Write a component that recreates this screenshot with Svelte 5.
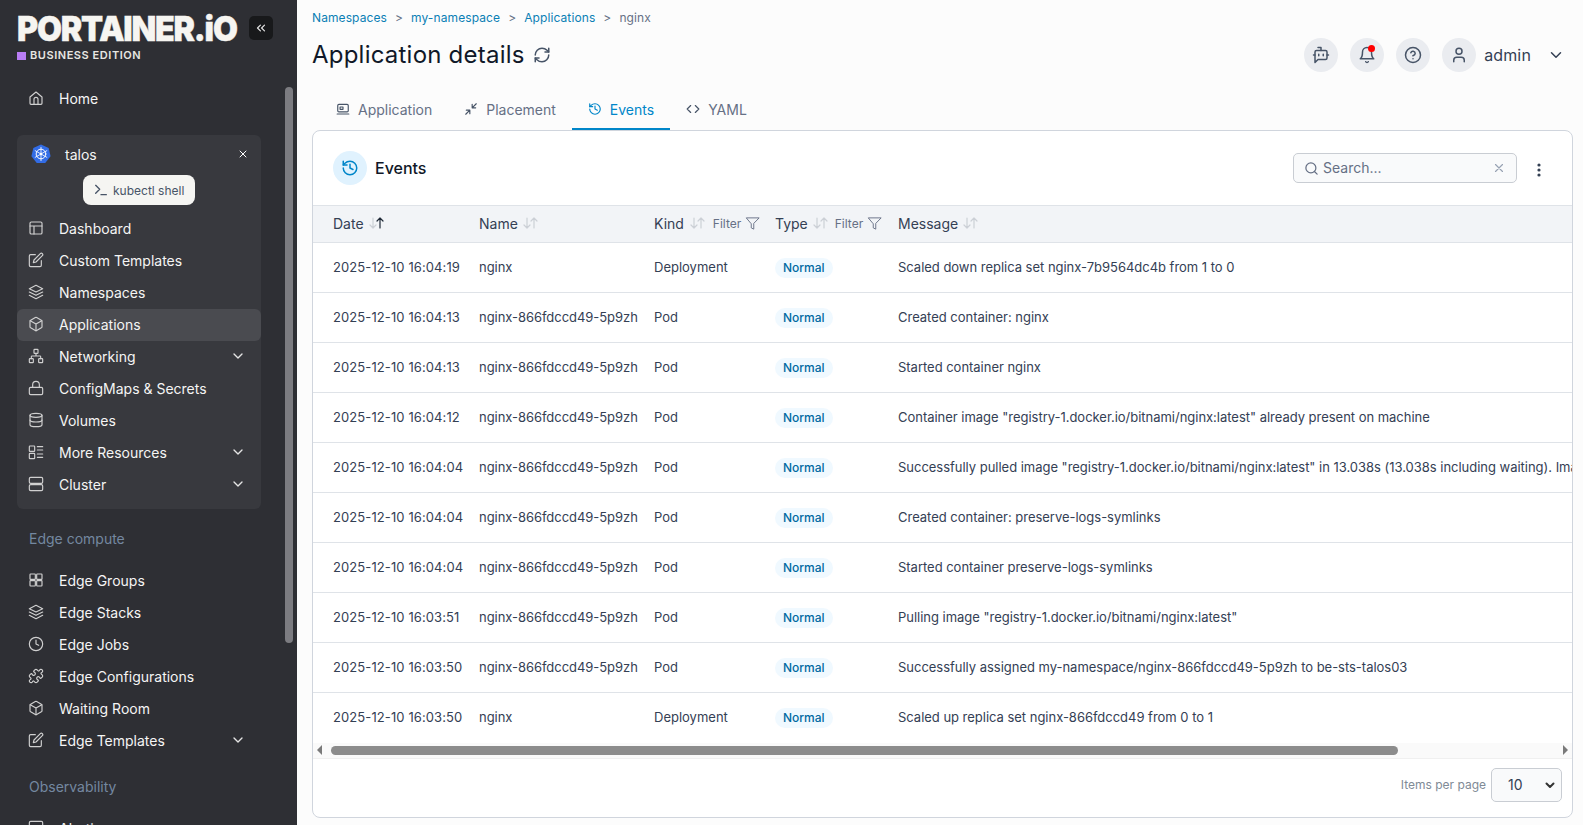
<script>
  const I = {
    home: '<path d="M3 10.500 12 3l9 7.500V20a1.500 1.500 0 0 1-1.500 1.500h-15A1.500 1.500 0 0 1 3 20z"/><path d="M9 21.500V14a3 3 0 0 1 6 0v7.500"/>',
    layout: '<rect x="3" y="3" width="18" height="18" rx="2"/><path d="M3 9h18M9 21V9"/>',
    edit: '<path d="M11 4H4a2 2 0 0 0-2 2v14a2 2 0 0 0 2 2h14a2 2 0 0 0 2-2v-7"/><path d="M18.500 2.500a2.121 2.121 0 0 1 3 3L12 15l-4 1 1-4z"/>',
    layers: '<path d="M12 2 2 7l10 5 10-5z"/><path d="m2 17 10 5 10-5"/><path d="m2 12 10 5 10-5"/>',
    box: '<path d="M21 16V8a2 2 0 0 0-1-1.730l-7-4a2 2 0 0 0-2 0l-7 4A2 2 0 0 0 3 8v8a2 2 0 0 0 1 1.730l7 4a2 2 0 0 0 2 0l7-4A2 2 0 0 0 21 16z"/><path d="M3.270 6.960 12 12.010l8.730-5.050M12 22.080V12"/>',
    network: '<rect x="16" y="16" width="6" height="6" rx="1"/><rect x="2" y="16" width="6" height="6" rx="1"/><rect x="9" y="2" width="6" height="6" rx="1"/><path d="M5 16v-3a1 1 0 0 1 1-1h12a1 1 0 0 1 1 1v3M12 12V8"/>',
    lock: '<rect x="2" y="11" width="20" height="11" rx="2"/><path d="M7 11V7a5 5 0 0 1 10 0v4"/>',
    db: '<ellipse cx="12" cy="5" rx="9" ry="3"/><path d="M21 12c0 1.660-4 3-9 3s-9-1.340-9-3"/><path d="M3 5v14c0 1.660 4 3 9 3s9-1.340 9-3V5"/>',
    list: '<rect x="2" y="3" width="8" height="8" rx="1"/><rect x="2" y="14" width="8" height="8" rx="1"/><path d="M14 4h8M14 9h8M14 15h8M14 20h8"/>',
    server: '<rect x="2" y="2" width="20" height="9" rx="2"/><rect x="2" y="13" width="20" height="9" rx="2"/>',
    grid: '<rect x="3" y="3" width="8" height="8" rx="1"/><rect x="13" y="3" width="8" height="8" rx="1"/><rect x="13" y="13" width="8" height="8" rx="1"/><rect x="3" y="13" width="8" height="8" rx="1"/>',
    clock: '<circle cx="12" cy="12" r="10"/><path d="M12 6v6l4 2"/>',
    puzzle: '<path d="M19.439 7.850c-.049.322.059.648.289.878l1.568 1.568c.47.47.706 1.087.706 1.704s-.235 1.233-.706 1.704l-1.611 1.611a.98.98 0 0 1-.837.276c-.47-.07-.802-.48-.968-.925a2.501 2.501 0 1 0-3.214 3.214c.446.166.855.497.925.968a.979.979 0 0 1-.276.837l-1.61 1.610a2.404 2.404 0 0 1-1.705.707 2.402 2.402 0 0 1-1.704-.706l-1.568-1.568a1.026 1.026 0 0 0-.877-.29c-.493.074-.84.504-1.020.968a2.500 2.500 0 1 1-3.237-3.237c.464-.18.894-.527.967-1.020a1.026 1.026 0 0 0-.289-.877l-1.568-1.568A2.402 2.402 0 0 1 1.998 12c0-.617.236-1.234.706-1.704L4.230 8.770c.24-.24.581-.353.917-.303.515.077.877.528 1.073 1.010a2.500 2.500 0 1 0 3.259-3.259c-.482-.196-.933-.558-1.010-1.073-.05-.336.062-.676.303-.917l1.525-1.525A2.402 2.402 0 0 1 12 1.998c.617 0 1.234.236 1.704.706l1.568 1.568c.23.23.556.338.877.29.493-.074.84-.504 1.020-.968a2.500 2.500 0 1 1 3.237 3.237c-.464.18-.894.527-.967 1.020Z"/>',
    chev: '<path d="m6 9 6 6 6-6"/>',
    x: '<path d="M18 6 6 18M6 6l12 12"/>',
    dbl: '<path d="m11 17-5-5 5-5M18 17l-5-5 5-5"/>',
    term: '<path d="m4 17 6-6-6-6M12 19h8"/>',
    refresh: '<path d="M3 12a9 9 0 0 1 9-9 9.750 9.750 0 0 1 6.740 2.740L21 8"/><path d="M21 3v5h-5"/><path d="M21 12a9 9 0 0 1-9 9 9.750 9.750 0 0 1-6.740-2.740L3 16"/><path d="M8 16H3v5"/>',
    history: '<path d="M3 12a9 9 0 1 0 9-9 9.750 9.750 0 0 0-6.740 2.740L3 8"/><path d="M3 3v5h5"/><path d="M12 7v5l4 2"/>',
    app: '<rect x="3" y="4" width="18" height="13" rx="2"/><path d="M2 20.500h20M7 8.500h5v4H7z"/>',
    shrink: '<path d="M4 14h6v6M20 10h-6V4M14 10l7-7M3 21l7-7"/>',
    code: '<path d="m16 18 6-6-6-6M8 6l-6 6 6 6"/>',
    bot: '<path d="M12 6V2H8"/><path d="m8 18-4 4V8a2 2 0 0 1 2-2h12a2 2 0 0 1 2 2v8a2 2 0 0 1-2 2Z"/><path d="M2 12h2M9 11v2M15 11v2M20 12h2"/>',
    bell: '<path d="M6 8a6 6 0 0 1 12 0c0 7 3 9 3 9H3s3-2 3-9"/><path d="M10.300 21a1.940 1.940 0 0 0 3.400 0"/>',
    help: '<circle cx="12" cy="12" r="10"/><path d="M9.090 9a3 3 0 0 1 5.830 1c0 2-3 3-3 3M12 17h.01"/>',
    user: '<path d="M19 21v-2a4 4 0 0 0-4-4H9a4 4 0 0 0-4 4v2"/><circle cx="12" cy="7" r="4"/>',
    search: '<circle cx="11" cy="11" r="8"/><path d="m21 21-4.300-4.300"/>',
    filter: '<path d="M22 3H2l8 9.460V19l4 2v-8.540z"/>'
  };

  const cluster = [
    ['layout', 'Dashboard'], ['edit', 'Custom Templates'], ['layers', 'Namespaces'],
    ['box', 'Applications', false, true], ['network', 'Networking', true],
    ['lock', 'ConfigMaps & Secrets'], ['db', 'Volumes'],
    ['list', 'More Resources', true], ['server', 'Cluster', true]
  ];
  const edge = [
    ['grid', 'Edge Groups'], ['layers', 'Edge Stacks'], ['clock', 'Edge Jobs'],
    ['puzzle', 'Edge Configurations'], ['box', 'Waiting Room'], ['edit', 'Edge Templates', true]
  ];
  const tabs = [['app', 'Application'], ['shrink', 'Placement'], ['history', 'Events', true], ['code', 'YAML']];
  const pod = 'nginx-866fdccd49-5p9zh';
  const rows = [
    ['2025-12-10 16:04:19', 'nginx', 'Deployment', 'Scaled down replica set nginx-7b9564dc4b from 1 to 0'],
    ['2025-12-10 16:04:13', pod, 'Pod', 'Created container: nginx'],
    ['2025-12-10 16:04:13', pod, 'Pod', 'Started container nginx'],
    ['2025-12-10 16:04:12', pod, 'Pod', 'Container image "registry-1.docker.io/bitnami/nginx:latest" already present on machine'],
    ['2025-12-10 16:04:04', pod, 'Pod', 'Successfully pulled image "registry-1.docker.io/bitnami/nginx:latest" in 13.038s (13.038s including waiting). Image size: 68.2 MB'],
    ['2025-12-10 16:04:04', pod, 'Pod', 'Created container: preserve-logs-symlinks'],
    ['2025-12-10 16:04:04', pod, 'Pod', 'Started container preserve-logs-symlinks'],
    ['2025-12-10 16:03:51', pod, 'Pod', 'Pulling image "registry-1.docker.io/bitnami/nginx:latest"'],
    ['2025-12-10 16:03:50', pod, 'Pod', 'Successfully assigned my-namespace/nginx-866fdccd49-5p9zh to be-sts-talos03'],
    ['2025-12-10 16:03:50', 'nginx', 'Deployment', 'Scaled up replica set nginx-866fdccd49 from 0 to 1']
  ];
</script>

{#snippet ic(name, size = 16)}
  <svg class="ic" width={size} height={size} viewBox="0 0 24 24" fill="none" stroke="currentColor" stroke-width="2" stroke-linecap="round" stroke-linejoin="round">{@html I[name]}</svg>
{/snippet}

{#snippet item(it)}
  <div class="nav" class:active={it[3]}>
    <span class="nico">{@render ic(it[0])}</span>
    <span class="grow">{it[1]}</span>
    {#if it[2]}<span class="chev">{@render ic('chev')}</span>{/if}
  </div>
{/snippet}

{#snippet sort(dark = false)}
  <svg class="sort" width="18" height="14" viewBox="0 0 18 14" fill="none" stroke-width="1.200" stroke-linecap="round" stroke-linejoin="round">
    <path d="M5 2v10M2 9l3 3 3-3" stroke="#ccd0d6"/>
    <path d="M12 12V2M9 5l3-3 3 3" stroke={dark ? '#1f2937' : '#ccd0d6'}/>
  </svg>
{/snippet}

{#snippet filter()}
  <span class="filter">Filter <span class="fico">{@render ic('filter', 15)}</span></span>
{/snippet}

<div class="root">
  <aside class="side">
    <div class="brand">
      <div class="logoline">
        <div class="logo">PORTAINER.iO</div>
        <button class="collapse">{@render ic('dbl', 14)}</button>
      </div>
      <div class="edition"><span class="sq"></span>BUSINESS EDITION</div>
    </div>

    <div class="nav">
      <span class="nico">{@render ic('home')}</span><span class="grow">Home</span>
    </div>

    <div class="panel">
      <div class="env">
        <svg class="k8s" width="20" height="20" viewBox="0 0 24 24">
          <polygon points="12,0.500 21.200,4.900 23.500,14.800 17.100,22.800 6.900,22.800 0.500,14.800 2.800,4.900" fill="#326ce5"/>
          <g fill="none" stroke="#fff" stroke-linecap="round">
            <circle cx="12" cy="12" r="5.800" stroke-width="1.200"/>
            <path stroke-width="1" d="M12 4v16M5 8l14 8M19 8 5 16"/>
          </g>
          <circle cx="12" cy="12" r="1.500" fill="#fff"/>
        </svg>
        <span class="grow">talos</span>
        <span class="close">{@render ic('x', 12)}</span>
      </div>
      <div class="shellwrap">
        <button class="shell">{@render ic('term', 16)}<span>kubectl shell</span></button>
      </div>
      {#each cluster as it}{@render item(it)}{/each}
    </div>

    <div class="label">Edge compute</div>
    {#each edge as it}{@render item(it)}{/each}
    <div class="label second">Observability</div>
    <div class="nav">
      <span class="nico">{@render ic('server')}</span><span class="grow">Alerting</span>
    </div>
    <div class="sthumb"></div>
  </aside>

  <main class="main">
    <header class="top">
      <nav class="crumbs">
        <a href="#a">Namespaces</a><span class="sep">&gt;</span>
        <a href="#a">my-namespace</a><span class="sep">&gt;</span>
        <a href="#a">Applications</a><span class="sep">&gt;</span>
        <span class="cur">nginx</span>
      </nav>
      <div class="titlerow">
        <h1>Application details</h1>
        <span class="reload">{@render ic('refresh', 18)}</span>
        <div class="actions">
          <span class="circle">{@render ic('bot', 18)}</span>
          <span class="circle bell">{@render ic('bell', 18)}<i></i></span>
          <span class="circle">{@render ic('help', 18)}</span>
          <span class="circle">{@render ic('user', 18)}</span>
          <span class="admin">admin</span>
          <span class="userchev">{@render ic('chev', 18)}</span>
        </div>
      </div>
    </header>

    <div class="tabs">
      {#each tabs as t}
        <div class="tab" class:on={t[2]}>{@render ic(t[0], 14)}<span>{t[1]}</span></div>
      {/each}
    </div>

    <section class="card">
      <div class="chead">
        <span class="cico">{@render ic('history', 18)}</span>
        <h2>Events</h2>
        <div class="search">
          <span class="sico">{@render ic('search', 15)}</span>
          <span class="ph">Search...</span>
          <span class="sx">{@render ic('x', 14)}</span>
        </div>
        <svg class="dots" width="4" height="14" viewBox="0 0 4 14" fill="#344054"><circle cx="2" cy="2" r="1.600"/><circle cx="2" cy="7" r="1.600"/><circle cx="2" cy="12" r="1.600"/></svg>
      </div>

      <div class="tablewrap">
        <table>
          <colgroup><col class="c1" /><col class="c2" /><col class="c3" /><col class="c4" /><col /></colgroup>
          <thead>
            <tr>
              <th class="first"><div class="hc">Date {@render sort(true)}</div></th>
              <th><div class="hc">Name {@render sort()}</div></th>
              <th><div class="hc kind">Kind {@render sort()}{@render filter()}</div></th>
              <th><div class="hc">Type {@render sort()}{@render filter()}</div></th>
              <th><div class="hc">Message {@render sort()}</div></th>
            </tr>
          </thead>
          <tbody>
            {#each rows as r}
              <tr>
                <td class="first date">{r[0]}</td>
                <td class="pod">{r[1]}</td>
                <td class="plain">{r[2]}</td>
                <td><span class="badge">Normal</span></td>
                <td class="msg">{r[3]}</td>
              </tr>
            {/each}
          </tbody>
        </table>
      </div>

      <div class="hscroll">
        <span class="arrow left"></span>
        <div class="track"><div class="thumb"></div></div>
        <span class="arrow right"></span>
      </div>

      <div class="foot">
        <span>Items per page</span>
        <div class="select">10 <svg width="12" height="12" viewBox="0 0 24 24" fill="none" stroke="#333" stroke-width="4" stroke-linecap="round" stroke-linejoin="round"><path d="m5 9 7 7 7-7"/></svg></div>
      </div>
    </section>
  </main>
</div>

<style>
  :global(body) { margin: 0; font-family: Inter, "Noto Sans", sans-serif; background: #fcfcfc; overflow: hidden; }
  * { box-sizing: border-box; }
  .ic { display: block; flex: none; }
  .root { display: flex; height: 825px; overflow: hidden; }

  .side { position: relative; flex: 0 0 297px; height: 825px; overflow: hidden; background: #2e2f34; color: #f5f5f4; font-size: 14px; padding: 0 36px 0 17px; }
  .brand { height: 83px; padding-top: 11px; }
  .logoline { display: flex; align-items: center; justify-content: space-between; margin-right: -12px; height: 36px; }
  .logo { font-size: 34px; font-weight: 900; line-height: 36px; letter-spacing: -1.3px; color: #f6f5f1; white-space: nowrap; transform: scaleX(.948); transform-origin: left center; -webkit-text-stroke: .4px #f6f5f1; }
  .collapse { width: 24px; height: 24px; display: flex; align-items: center; justify-content: center; background: #18191b; border: 0; border-radius: 5px; color: #e5e5e5; padding: 0; margin-top: -3px; }
  .edition { display: flex; align-items: center; gap: 4px; margin-top: 2px; font-size: 11px; font-weight: 600; letter-spacing: .55px; color: #e7e6e2; line-height: 13px; }
  .sq { width: 9px; height: 8px; background: #b97df5; }
  .nav { display: flex; align-items: center; height: 32px; padding: 0 15px 2px 11px; border-radius: 6px; color: #f5f5f4; }
  .nico { width: 31px; color: #d0d0d0; }
  .nico :global(svg) { stroke-width: 1.75; }
  .grow { flex: 1; }
  .chev { color: #e5e5e5; }
  .active { background: #4a4b50; }
  .panel { margin-top: 20px; height: 374px; padding-top: 8px; background: #38393e; border-radius: 6px; }
  .env { display: flex; align-items: center; height: 24px; padding: 0 11px 2px 14px; }
  .k8s { margin-right: 14px; }
  .close { color: #fff; margin-right: 1px; }
  .shellwrap { display: flex; justify-content: center; padding: 8px 0; height: 46px; }
  .shell { display: flex; align-items: center; gap: 4px; width: 112px; height: 30px; padding: 0 0 0 10px; border: 0; border-radius: 8px; background: #f5f5f2; color: #475467; font: 12px Inter, sans-serif; }
  .label { margin-top: 20px; margin-bottom: 16px; padding-left: 12px; line-height: 20px; color: #7488a0; }
  .sthumb { position: absolute; left: 285px; top: 87px; width: 8px; height: 556px; border-radius: 4px; background: #7c7c81; }

  .main { flex: 1; min-width: 0; padding: 0 10px 0 15px; }
  .top { height: 90px; padding-top: 9px; }
  .crumbs { display: flex; align-items: center; height: 18px; font-size: 12px; line-height: 18px; letter-spacing: .1px; }
  .crumbs a { color: #0b7fb5; text-decoration: none; }
  .sep { color: #667085; margin: 0 8px; }
  .cur { color: #667085; }
  .titlerow { display: flex; align-items: center; height: 36px; margin-top: 10px; }
  h1 { margin: 0; font-size: 24px; font-weight: 400; color: #101828; line-height: 36px; letter-spacing: .22px; }
  .reload { margin-left: 8px; color: #475467; }
  .actions { display: flex; align-items: center; margin-left: auto; color: #344054; }
  .circle { position: relative; width: 34px; height: 34px; margin-right: 12px; border-radius: 50%; background: #eaecf0; display: flex; align-items: center; justify-content: center; color: #475467; }
  .circle:nth-child(4) { margin-right: 8px; }
  .bell i { position: absolute; top: 7px; left: 18px; width: 7px; height: 7px; background: #f00; border-radius: 50%; }
  .admin { font-size: 16px; letter-spacing: .15px; }
  .userchev { margin: 0 8px 0 16px; }

  .tabs { display: flex; height: 40px; margin-left: 8px; }
  .tab { display: flex; align-items: center; gap: 8px; height: 40px; padding: 0 16px; font-size: 14px; color: #667085; border-bottom: 2px solid transparent; }
  .tab :global(.ic) { color: #475467; }
  .tab.on { color: #0086c9; border-color: #0086c9; }
  .tab.on :global(.ic) { color: #0086c9; }

  .card { height: 688px; background: #fff; border: 1px solid #d0d5dd; border-radius: 8px; overflow: hidden; display: flex; flex-direction: column; }
  .chead { display: flex; align-items: center; height: 74px; padding: 0 31px 0 20px; flex: none; }
  .cico { width: 34px; height: 34px; border-radius: 50%; background: #e0f2fe; color: #0086c9; display: flex; align-items: center; justify-content: center; }
  h2 { margin: 0 0 0 8px; font-size: 16px; font-weight: 500; color: #101828; }
  .search { display: flex; align-items: center; width: 224px; height: 30px; margin-left: auto; padding: 0 10px 0 10px; background: #f9fafb; border: 1px solid #c9cdd3; border-radius: 5px; font-size: 14px; }
  .sico { color: #667085; margin-right: 4px; }
  .ph { flex: 1; color: #667085; padding-bottom: 1px; }
  .sx { color: #98a2b3; }
  .dots { margin-left: 20px; margin-top: 3px; }

  .tablewrap { overflow: hidden; flex: none; }
  table { width: 1460px; table-layout: fixed; border-collapse: collapse; font-size: 13px; color: #344054; }
  .c1 { width: 166px; } .c2 { width: 175px; } .c3 { width: 121px; } .c4 { width: 123px; }
  th { height: 37px; padding: 0 0 2px; font-weight: 400; text-align: left; background: #f2f4f7; border-top: 1px solid #dfe3e8; border-bottom: 1px solid #dfe3e8; font-size: 14px; white-space: nowrap; }
  th.first { padding-left: 20px; }
  td { height: 50px; padding: 0; border-bottom: 1px solid #dfe3e8; white-space: nowrap; }
  tbody tr:last-child td { border-bottom: 0; }
  .first { padding-left: 20px; }
  .date, .pod, .plain, .msg { padding-bottom: 2px; }
  .date { letter-spacing: .1px; }
  .pod { letter-spacing: -.05px; }
  .msg { letter-spacing: -.022px; }
  .hc { display: flex; align-items: center; gap: 4px; }
  .kind { gap: 5px; }
  .sort { flex: none; }
  .filter { display: inline-flex; align-items: center; gap: 4px; margin-left: 1px; font-size: 12px; color: #667085; }
  .fico { color: #667085; }
  .fico :global(svg) { stroke-width: 1.5; }
  .badge { display: inline-block; padding: 0 8px; height: 20px; line-height: 20px; border-radius: 10px; background: #f0f9ff; color: #026aa2; font-size: 12px; font-weight: 500; vertical-align: middle; }

  .hscroll { display: flex; align-items: center; height: 16px; background: #fafafa; border-bottom: 1px solid #f0f0f0; flex: none; }
  .arrow { width: 0; height: 0; border-top: 5px solid transparent; border-bottom: 5px solid transparent; flex: none; }
  .arrow.left { border-right: 5px solid #7a7a7a; margin-left: 4px; }
  .arrow.right { border-left: 5px solid #7a7a7a; margin-right: 4px; }
  .track { flex: 1; padding-left: 9px; }
  .thumb { width: 1067px; height: 9px; border-radius: 5px; background: #8c8c8c; }

  .foot { flex: 1; display: flex; align-items: center; justify-content: flex-end; gap: 5px; padding: 0 10px 6px 0; font-size: 12px; color: #808a96; }
  .select { display: flex; align-items: center; justify-content: space-between; width: 71px; height: 34px; padding: 0 5px 0 16px; background: #f9fafb; border: 1px solid #c9cdd3; border-radius: 5px; color: #344054; font-size: 14px; }
</style>
